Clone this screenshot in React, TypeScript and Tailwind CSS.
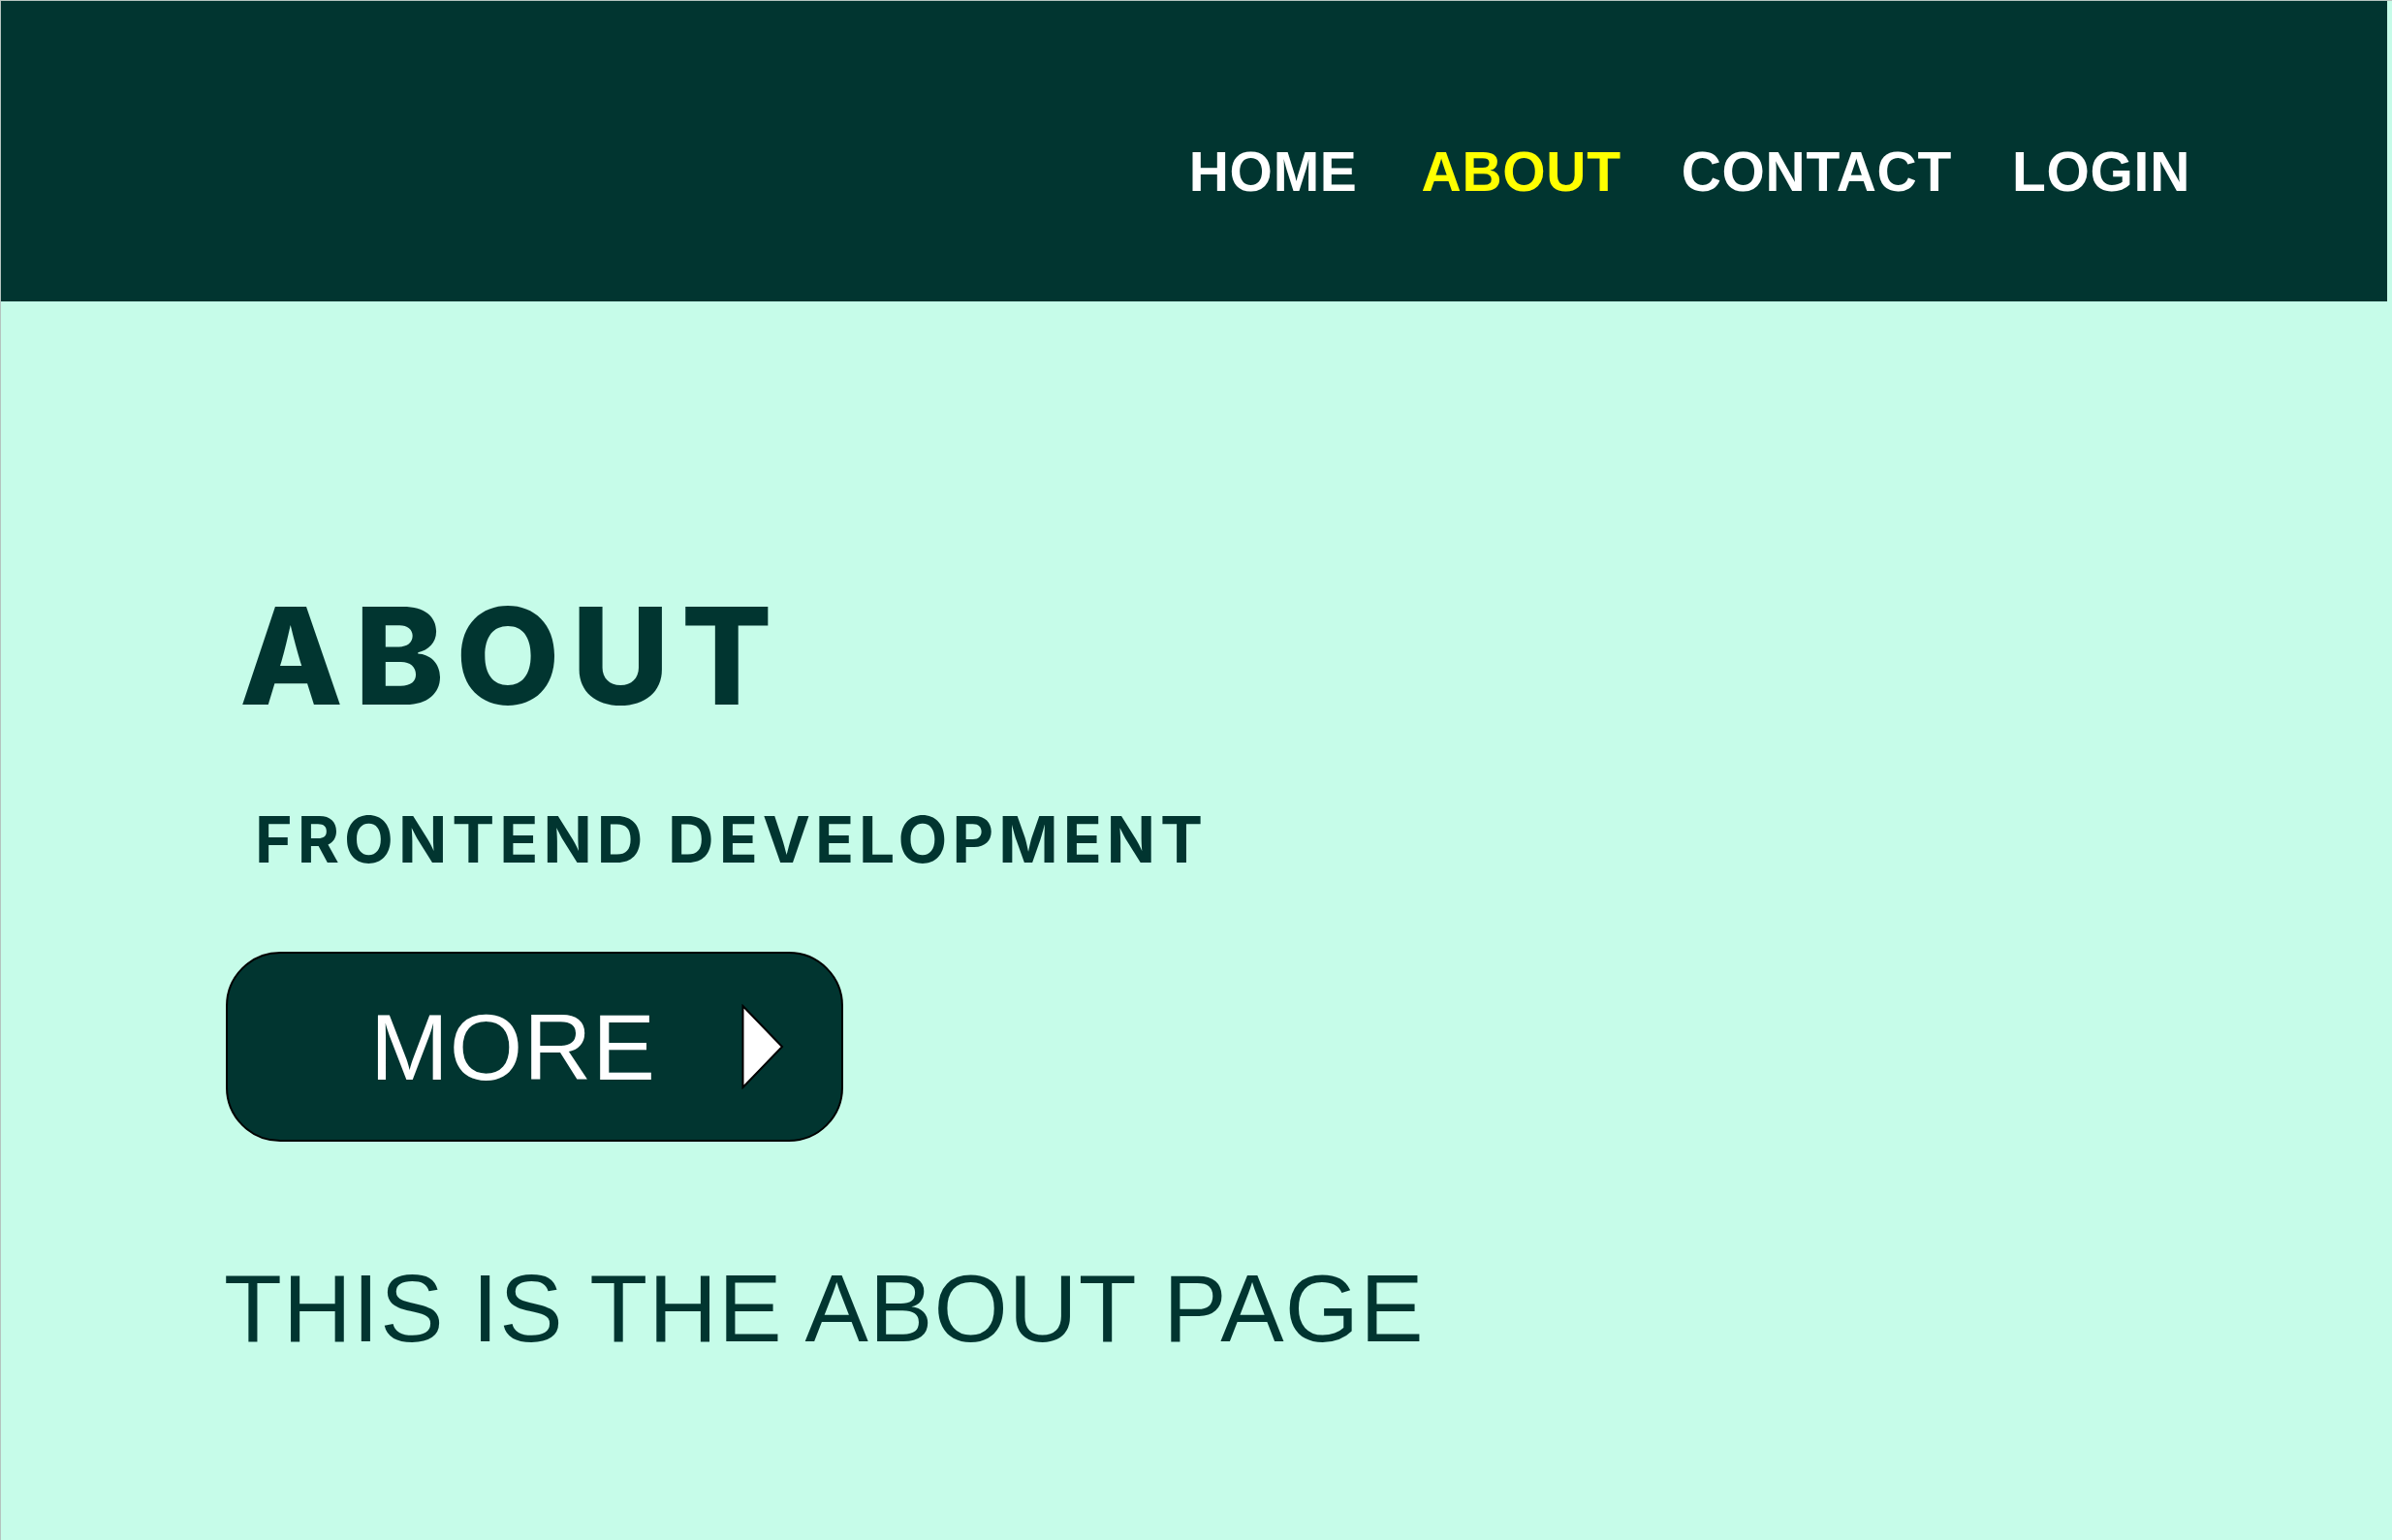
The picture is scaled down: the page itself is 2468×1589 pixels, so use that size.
import React from 'react'

const navItems = ['HOME', 'ABOUT', 'CONTACT', 'LOGIN']

function Header() {
  return (
    <header className="h-[310px] mr-[5px] bg-[#013530] flex justify-end items-start pt-[148px] pr-[203px]">
      <nav className="flex gap-[62px]">
        {navItems.map((item) => (
          <a
            key={item}
            href="#"
            className={`font-['Liberation_Sans',Arial,sans-serif] font-bold text-[57px] leading-none tracking-[0.7px] ${
              item === 'ABOUT' ? 'text-[#ffff00]' : 'text-white'
            } ${item === 'HOME' ? 'mr-[4px]' : ''}`}
          >
            {item}
          </a>
        ))}
      </nav>
    </header>
  )
}

function MoreButton() {
  return (
    <button className="ml-[232px] w-[637px] h-[196px] rounded-[56px] border-2 border-black bg-[#013530] flex items-center pl-[147px]">
      <span className="font-['Liberation_Sans',Arial,sans-serif] text-[97px] leading-none tracking-[1px] text-white">MORE</span>
      <svg className="ml-[88px]" width="44" height="88" viewBox="0 0 44 88">
        <polygon points="1.5,2 42,44 1.5,86" fill="#ffffff" stroke="#000000" strokeWidth="2" />
      </svg>
    </button>
  )
}

export default function App() {
  return (
    <div className="min-h-[1589px] w-full bg-[#c6fce9] border-t border-l border-[#b5c4bf]">
      <Header />
      <main className="flex flex-col items-start pt-[296px] pb-[120px]">
        <h1 className="ml-[246px] font-['Inter',sans-serif] font-extrabold text-[139px] leading-none text-[#013530] tracking-[12px]">
          ABOUT
        </h1>
        <h2 className="ml-[262px] mt-[87px] font-['Inter',sans-serif] font-bold text-[66px] leading-none text-[#013530] tracking-[5px]">
          FRONTEND DEVELOPMENT
        </h2>
        <div className="mt-[83px]">
          <MoreButton />
        </div>
        <p className="ml-[230px] mt-[123px] font-['Liberation_Sans',Arial,sans-serif] text-[98px] leading-none tracking-[1.1px] text-[#013530]">
          THIS IS THE ABOUT PAGE
        </p>
      </main>
    </div>
  )
}
